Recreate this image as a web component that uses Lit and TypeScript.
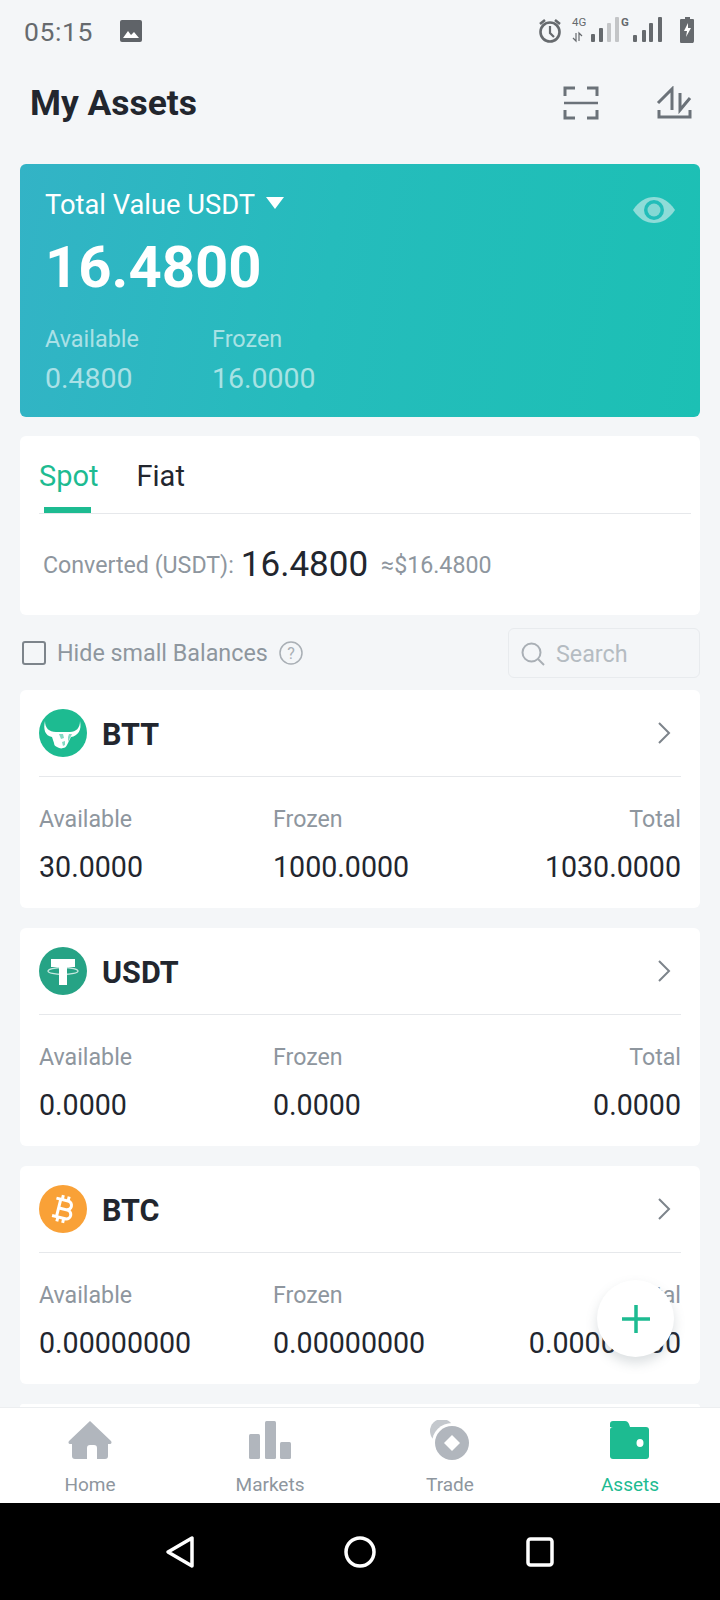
import { LitElement, html, css, svg } from 'lit';
import { customElement } from 'lit/decorators.js';

const bull = svg`
  <circle cx="24" cy="24" r="24" fill="#1dbb91"/>
  <path d="M6 12c0 7 4 11 11 11h14c6 0 10-4 10-11 2 9-2 15-9 16l-4 8c-1 2-2 3-4 3-2 1-4 0-6-1-2-1-3-2-3-4l-2-6c-7-1-9-8-7-16z" fill="#fff"/>
  <path d="M20 25h4l1 4-3 1zM23 33l3-1 0 4-2 1zM30 25h3l-4 8 0-5z" fill="#1dbb91" opacity=".55"/>`;

const tether = svg`
  <circle cx="24" cy="24" r="24" fill="#26a385"/>
  <path d="M12 12h24v8h-8v18h-8V20h-8z" fill="#fff"/>
  <ellipse cx="24" cy="24" rx="15" ry="3.5" fill="none" stroke="#fff" stroke-width="1.3" opacity=".75"/>`;

const bitcoin = svg`
  <circle cx="24" cy="24" r="24" fill="#f9a137"/>
  <g transform="rotate(14 24 24) translate(6 6) scale(1.5)">
    <path fill="#fff" d="M17.06 11.57c.59-.69.94-1.59.94-2.57 0-1.86-1.27-3.43-3-3.87V3h-2v2h-2V3H9v2H6v2h2v10H6v2h3v2h2v-2h2v2h2v-2c2.21 0 4-1.79 4-4 0-1.45-.78-2.73-1.94-3.43zM10 7h4c1.1 0 2 .9 2 2s-.9 2-2 2h-4V7zm5 10h-5v-4h5c1.1 0 2 .9 2 2s-.9 2-2 2z"/>
  </g>`;

const coins = [
  { name: 'BTT', logo: bull, available: '30.0000', frozen: '1000.0000', total: '1030.0000' },
  { name: 'USDT', logo: tether, available: '0.0000', frozen: '0.0000', total: '0.0000' },
  { name: 'BTC', logo: bitcoin, available: '0.00000000', frozen: '0.00000000', total: '0.00000000' },
];

const navItems = [
  {
    label: 'Home',
    icon: svg`<path d="M22 1 43 21c1 1 .5 3-1 3h-2v12c0 2-1 3-3 3h-8V28c0-2-1-3-3-3h-4c-2 0-3 1-3 3v11H7c-2 0-3-1-3-3V24H2c-1.500 0-2-2-1-3z" fill="#b1b6bd"/>`,
  },
  {
    label: 'Markets',
    icon: svg`<rect x="1" y="14" width="11" height="25" rx="1.500" fill="#b1b6bd"/><rect x="17" y="1" width="11" height="38" rx="1.500" fill="#b1b6bd"/><rect x="32" y="22" width="11" height="17" rx="1.500" fill="#b1b6bd"/>`,
  },
  {
    label: 'Trade',
    icon: svg`
      <circle cx="14" cy="11" r="12" fill="#c4c8cd"/>
      <circle cx="24" cy="23" r="20" fill="#fff"/>
      <circle cx="24" cy="23" r="17" fill="#b1b6bd"/>
      <path d="M24 15 32 23 24 31 16 23z" fill="#fff"/>`,
  },
  {
    label: 'Assets',
    active: true,
    icon: svg`
      <path d="M2 7V4c0-2 1-3 3-3h12c2 0 3 1 4 3l1 3z" fill="#1dbb91"/>
      <rect x="2" y="7" width="39" height="32" rx="3" fill="#1dbb91"/>
      <ellipse cx="32" cy="23" rx="3.500" ry="4" fill="#fff"/>`,
  },
];

@customElement('coin-card')
export class CoinCard extends LitElement {
  static properties = {
    coin: { attribute: false },
  };

  coin: any;

  static styles = css`
    :host {
      display: block;
      flex: none;
      height: 218px;
      background: #fff;
      border-radius: 6px;
      padding: 0 19px;
      box-sizing: border-box;
    }

    .head {
      height: 86px;
      display: flex;
      align-items: center;
      border-bottom: 1px solid #e6e8eb;
    }

    .logo {
      width: 48px;
      height: 48px;
      margin-right: 15px;
    }

    .name {
      flex: 1;
      font-size: 30.5px;
      font-weight: 700;
      padding-top: 2px;
      color: #22262e;
    }

    .chevron {
      width: 14px;
      height: 22px;
      margin-right: 10px;
    }

    .grid {
      display: grid;
      grid-template-columns: 234px 1fr 1fr;
      padding-top: 28px;
    }

    .label {
      font-size: 23.2px;
      line-height: 28px;
      color: #8e969e;
    }

    .value {
      font-size: 28.6px;
      line-height: 34px;
      margin-top: 17px;
      color: #22262e;
    }

    .end {
      text-align: right;
    }
  `;

  render() {
    const c = this.coin;
    return html`
      <div class="head">
        <svg class="logo" viewBox="0 0 48 48">${c.logo}</svg>
        <div class="name">${c.name}</div>
        <svg class="chevron" viewBox="0 0 14 22"><path d="M2 1 12 11 2 21" fill="none" stroke="#7d848b" stroke-width="2"/></svg>
      </div>
      <div class="grid">
        <div>
          <div class="label">Available</div>
          <div class="value">${c.available}</div>
        </div>
        <div>
          <div class="label">Frozen</div>
          <div class="value">${c.frozen}</div>
        </div>
        <div class="end">
          <div class="label">Total</div>
          <div class="value">${c.total}</div>
        </div>
      </div>
    `;
  }
}

@customElement('app-root')
export class AppRoot extends LitElement {
  static styles = css`
    :host {
      display: flex;
      flex-direction: column;
      position: relative;
      width: 720px;
      height: 1600px;
      overflow: hidden;
      background: #f4f6f8;
      font-family: Roboto, 'Liberation Sans', sans-serif;
    }

    /* status bar */
    .status {
      flex: none;
      height: 62px;
      display: flex;
      align-items: center;
      padding: 0 24px;
      color: #666a6e;
    }

    .time {
      font-size: 26.5px;
      letter-spacing: 0.6px;
      width: 96px;
    }

    .status-pic {
      width: 22px;
      height: 22px;
    }

    .status-right {
      margin-left: auto;
      margin-right: 1px;
      width: 158px;
      height: 34px;
    }

    .status-right text {
      font-family: Roboto, sans-serif;
      fill: #666a6e;
    }

    /* title row */
    .header {
      flex: none;
      height: 82px;
      display: flex;
      align-items: center;
      padding: 0 28px 0 30px;
    }

    .title {
      flex: 1;
      font-size: 35.4px;
      font-weight: 700;
      color: #22262e;
    }

    .header svg {
      width: 36px;
      height: 34px;
      margin-left: 57px;
    }

    .main {
      flex: 1;
      min-height: 0;
      overflow: hidden;
      display: flex;
      flex-direction: column;
      padding: 20px 20px 0;
    }

    /* hero card */
    .hero {
      flex: none;
      height: 253px;
      box-sizing: border-box;
      padding: 26px 25px 0;
      border-radius: 6px;
      background: linear-gradient(100deg, #33b3c6 0%, #25bcbc 45%, #1cc0b4 100%);
      color: #fff;
    }

    .hero-top {
      display: flex;
      align-items: flex-start;
    }

    .hero-title {
      font-size: 27.3px;
      line-height: 30px;
    }

    .caret {
      width: 18px;
      height: 12px;
      margin: 7px 0 0 11px;
    }

    .eye {
      width: 42px;
      height: 26px;
      margin: 7px 0 0 auto;
    }

    .amount {
      font-size: 58px;
      font-weight: 700;
      line-height: 66px;
      margin: 11px 0 0 0;
    }

    .hero-cols {
      display: flex;
      margin-top: 26px;
      color: rgba(255, 255, 255, 0.6);
    }

    .hero-col {
      width: 167px;
    }

    .hero-label {
      font-size: 23.4px;
      line-height: 26px;
    }

    .hero-value {
      font-size: 28.5px;
      line-height: 34px;
      margin-top: 10px;
    }

    /* tabs card */
    .tabs-card {
      flex: none;
      height: 179px;
      margin-top: 19px;
      background: #fff;
      border-radius: 6px;
    }

    .tabs {
      height: 77px;
      margin: 0 9px 0 19px;
      display: flex;
      align-items: center;
      gap: 38px;
      border-bottom: 1px solid #e6e8eb;
      font-size: 29px;
      color: #22262e;
    }

    .tab {
      position: relative;
      box-sizing: border-box;
      height: 100%;
      padding-top: 3px;
      display: flex;
      align-items: center;
    }

    .tab.on {
      color: #1dbb91;
    }

    .tab.on::after {
      content: '';
      position: absolute;
      left: 5px;
      right: 8px;
      bottom: 0;
      height: 6px;
      background: #1dbb91;
    }

    .converted {
      display: flex;
      align-items: center;
      padding: 31px 0 0 23px;
      font-size: 23.2px;
      line-height: 40px;
      color: #8e969e;
    }

    .converted b {
      font-weight: 400;
      font-size: 35px;
      color: #22262e;
      margin: 0 13px 0 7px;
    }

    /* filter row */
    .filter {
      flex: none;
      height: 75px;
      display: flex;
      align-items: center;
      font-size: 23.3px;
      color: #8e969e;
    }

    .check {
      width: 20px;
      height: 20px;
      margin: 0 11px 0 2px;
      border: 2px solid #7d848b;
      border-radius: 3px;
    }

    .help {
      width: 24px;
      height: 24px;
      margin-left: 11px;
    }

    .search {
      margin-left: auto;
      width: 192px;
      height: 50px;
      box-sizing: border-box;
      display: flex;
      align-items: center;
      padding: 2px 0 0 12px;
      border: 1px solid #e8ebee;
      border-radius: 6px;
      color: #b5bcc2;
    }

    .search svg {
      width: 24px;
      height: 24px;
      margin-right: 11px;
    }

    .list {
      display: flex;
      flex-direction: column;
      gap: 20px;
    }

    /* top edge of the next card, the rest is scrolled out of view */
    .peek {
      flex: none;
      height: 3px;
      background: #fff;
      border-radius: 6px 6px 0 0;
    }

    /* bottom tabs */
    .nav {
      flex: none;
      height: 96px;
      box-sizing: border-box;
      display: grid;
      grid-template-columns: repeat(4, 1fr);
      background: #fff;
      border-top: 1px solid #eceef0;
    }

    .nav-item {
      display: flex;
      flex-direction: column;
      align-items: center;
      font-size: 19px;
      color: #8e969e;
    }

    .nav-item.on {
      color: #1dbb91;
    }

    .nav-item svg {
      width: 44px;
      height: 40px;
      margin-top: 12px;
    }

    .nav-item span {
      line-height: 24px;
      margin-top: 13px;
    }

    .system {
      flex: none;
      height: 97px;
      background: #000;
      display: grid;
      grid-template-columns: repeat(3, 180px);
      justify-content: center;
      align-items: center;
      justify-items: center;
    }

    .system svg {
      width: 36px;
      height: 36px;
    }

    .fab {
      position: absolute;
      left: 597px;
      top: 1280px;
      width: 77px;
      height: 77px;
      border-radius: 50%;
      background: #fff;
      box-shadow: 0 6px 12px rgba(90, 110, 120, 0.22);
      display: flex;
      align-items: center;
      justify-content: center;
    }

    .fab svg {
      width: 30px;
      height: 30px;
    }
  `;

  render() {
    return html`
      <div class="status">
        <div class="time">05:15</div>
        <svg class="status-pic" viewBox="0 0 22 22">
          <rect width="22" height="22" rx="2" fill="#5f6368"/>
          <path d="M3 18 8 11l3 4 3-3 5 6z" fill="#fff"/>
        </svg>
        <svg class="status-right" viewBox="0 -3 158 34">
          <g fill="none" stroke="#666a6e">
            <circle cx="13" cy="15" r="9.500" stroke-width="2.600"/>
            <path d="M13 9v7l4 4" stroke-width="2.200"/>
            <path d="M3 7l5-4M23 7l-5-4" stroke-width="2.600"/>
          </g>
          <text x="35" y="8.500" font-size="11.500">4G</text>
          <path d="M39 16v8l-3-3M42 24v-8l3 3" fill="none" stroke="#666a6e" stroke-width="1.200"/>
          <g fill="#666a6e">
            <rect x="54" y="17" width="4" height="8" rx="1"/>
            <rect x="62" y="11" width="4" height="14" rx="1"/>
            <rect x="70" y="6" width="4" height="19" rx="1" opacity=".35"/>
            <rect x="78" y="0" width="4" height="25" rx="1" opacity=".35"/>
            <rect x="96" y="18" width="4" height="7" rx="1"/>
            <rect x="105" y="13" width="4" height="12" rx="1"/>
            <rect x="112" y="6" width="4" height="19" rx="1"/>
            <rect x="121" y="0" width="4" height="25" rx="1"/>
            <path d="M148 0h5v2h3c1 0 1 1 1 1v21c0 1-1 2-1 2h-12c-1 0-1-1-1-2V3s0-1 1-1h4z"/>
          </g>
          <text x="84" y="8.500" font-size="11.500" font-weight="700">G</text>
          <path d="M151 6l-4 8h3l-1 6 5-9h-3z" fill="#fff"/>
        </svg>
      </div>

      <div class="header">
        <div class="title">My Assets</div>
        <svg viewBox="0 0 36 34" fill="none" stroke="#6b7279" stroke-width="3">
          <path d="M2 10V2h10M24 2h10v8M2 24v8h10M24 32h10v-8"/>
          <path d="M1 17h34" stroke-width="2.500"/>
        </svg>
        <svg viewBox="0 0 36 34" fill="none" stroke="#6b7279" stroke-width="3">
          <path d="M2 17 16 3v21M24 7v17L34 12"/>
          <path d="M3 24v7h31v-7"/>
        </svg>
      </div>

      <div class="main">
        <div class="hero">
          <div class="hero-top">
            <div class="hero-title">Total Value USDT</div>
            <svg class="caret" viewBox="0 0 18 12"><path d="M0 0h18L9 12z" fill="#fff"/></svg>
            <svg class="eye" viewBox="0 0 42 26">
              <path d="M0 13C6 4 13 0 21 0s15 4 21 13c-6 9-13 13-21 13S6 22 0 13z" fill="#8edcd8"/>
              <circle cx="21" cy="13" r="10" fill="#22bdb9"/>
              <circle cx="21" cy="13" r="6.500" fill="#84d8d4"/>
            </svg>
          </div>
          <div class="amount">16.4800</div>
          <div class="hero-cols">
            <div class="hero-col">
              <div class="hero-label">Available</div>
              <div class="hero-value">0.4800</div>
            </div>
            <div class="hero-col">
              <div class="hero-label">Frozen</div>
              <div class="hero-value">16.0000</div>
            </div>
          </div>
        </div>

        <div class="tabs-card">
          <div class="tabs">
            <div class="tab on">Spot</div>
            <div class="tab">Fiat</div>
          </div>
          <div class="converted">
            Converted (USDT):<b>16.4800</b>≈$16.4800
          </div>
        </div>

        <div class="filter">
          <div class="check"></div>
          Hide small Balances
          <svg class="help" viewBox="0 0 24 24">
            <circle cx="12" cy="12" r="11" fill="none" stroke="#a9afb5" stroke-width="1.500"/>
            <text x="12" y="18" font-size="16" text-anchor="middle" fill="#a9afb5" font-family="Roboto">?</text>
          </svg>
          <div class="search">
            <svg viewBox="0 0 24 24" fill="none" stroke="#a9afb5" stroke-width="2">
              <circle cx="10.500" cy="10.500" r="9"/>
              <path d="M17 17l6 6"/>
            </svg>
            Search
          </div>
        </div>

        <div class="list">
          ${coins.map(c => html`<coin-card .coin=${c}></coin-card>`)}
          <div class="peek"></div>
        </div>
      </div>

      <div class="nav">
        ${navItems.map(n => html`
          <div class="nav-item ${n.active ? 'on' : ''}">
            <svg viewBox="0 0 44 40">${n.icon}</svg>
            <span>${n.label}</span>
          </div>
        `)}
      </div>

      <div class="system">
        <svg viewBox="0 0 36 36" fill="none" stroke="#fff" stroke-width="3.500" stroke-linejoin="round">
          <path d="M30 4v28L6 18z"/>
        </svg>
        <svg viewBox="0 0 36 36" fill="none" stroke="#fff" stroke-width="3.500">
          <circle cx="18" cy="18" r="14"/>
        </svg>
        <svg viewBox="0 0 36 36" fill="none" stroke="#fff" stroke-width="3.500">
          <rect x="6" y="5" width="24" height="26" rx="2.500"/>
        </svg>
      </div>

      <div class="fab">
        <svg viewBox="0 0 30 30"><path d="M15 1v28M1 15h28" stroke="#1dbb91" stroke-width="3.500"/></svg>
      </div>
    `;
  }
}
